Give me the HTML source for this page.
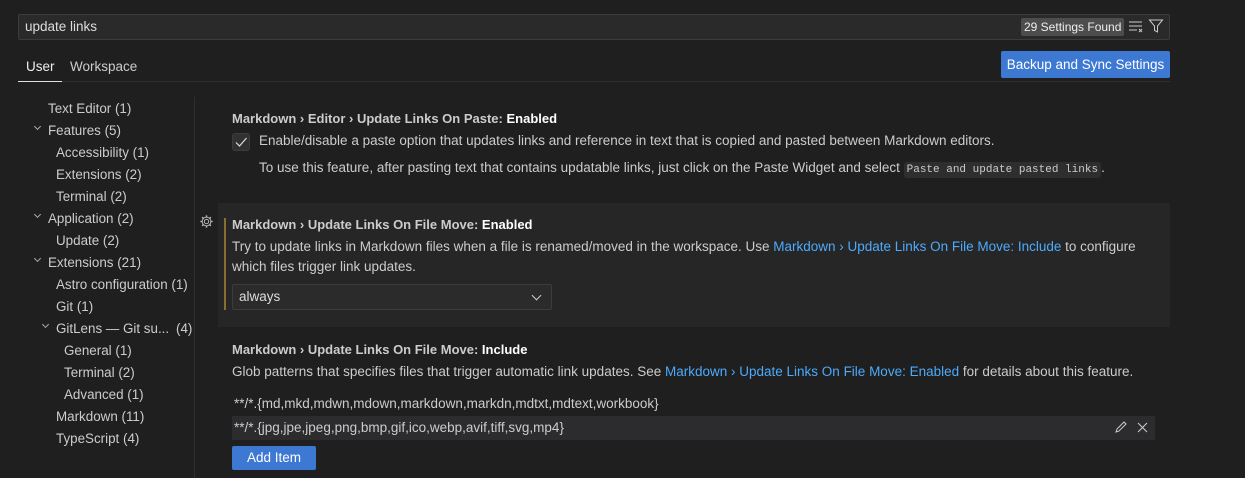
<!DOCTYPE html>
<html><head><style>
*{margin:0;padding:0;box-sizing:border-box}
body{width:1245px;height:478px;background:#1f1f1f;color:#cccccc;font-family:"Liberation Sans",sans-serif;font-size:13.5px;position:relative;overflow:hidden}
.a{position:absolute;white-space:nowrap}
.b{font-weight:bold;font-size:13px}
.w{color:#fff}
.lnk{color:#4daafc}
.tree div{position:absolute;white-space:nowrap;color:#cccccc;font-size:13.4px}
.chev{position:absolute;width:5px;height:5px;border-right:1px solid #aaa;border-bottom:1px solid #aaa;transform:rotate(45deg)}
</style></head><body>
<div class="a" style="left:18px;top:14px;width:1152px;height:26px;background:#2a2a2a;border:1px solid #3c3c3c;border-radius:2px"></div>
<div class="a" style="left:25px;top:19px;color:#ddd">update links</div>
<div class="a" style="left:1021px;top:18px;height:18px;padding:2px 3px;background:#4d4d4d;border-radius:2px;font-size:12px;color:#eee">29 Settings Found</div>
<svg class="a" style="left:1128px;top:20px" width="16" height="14"><path d="M1 2h13M1 6h13M1 10h8" stroke="#ccc" stroke-width="1"/><path d="M11 9l3 3M14 9l-3 3" stroke="#ccc"/></svg>
<svg class="a" style="left:1148px;top:18px" width="16" height="16"><path d="M1.5 2h13l-5 6v6l-3-1.5V8z" fill="none" stroke="#ccc"/></svg>
<div class="a" style="left:26px;top:59px;color:#eee">User</div>
<div class="a" style="left:70px;top:59px;color:#ccc">Workspace</div>
<div class="a" style="left:18px;top:81px;width:1152px;height:1px;background:#2f2f2f"></div>
<div class="a" style="left:18px;top:81px;width:44px;height:1px;background:#e0e0e0"></div>
<div class="a" style="left:1001px;top:51px;width:169px;height:27px;background:#3d79d3;border-radius:2px;color:#fff;text-align:center;line-height:27px">Backup and Sync Settings</div>
<div class="a" style="left:194px;top:97px;width:1px;height:381px;background:#2f2f2f"></div>
<div class="tree">
<div style="left:48px;top:101px">Text Editor (1)</div>
<span class="chev" style="left:35px;top:124px"></span><div style="left:48px;top:123px">Features (5)</div>
<div style="left:56px;top:145px">Accessibility (1)</div>
<div style="left:56px;top:167px">Extensions (2)</div>
<div style="left:56px;top:189px">Terminal (2)</div>
<span class="chev" style="left:35px;top:212px"></span><div style="left:48px;top:211px">Application (2)</div>
<div style="left:56px;top:233px">Update (2)</div>
<span class="chev" style="left:35px;top:256px"></span><div style="left:48px;top:255px">Extensions (21)</div>
<div style="left:56px;top:277px">Astro configuration (1)</div>
<div style="left:56px;top:299px">Git (1)</div>
<span class="chev" style="left:43px;top:322px"></span><div style="left:56px;top:321px">GitLens — Git su...</div><div style="left:176px;top:321px">(4)</div>
<div style="left:64px;top:343px">General (1)</div>
<div style="left:64px;top:365px">Terminal (2)</div>
<div style="left:64px;top:387px">Advanced (1)</div>
<div style="left:56px;top:409px">Markdown (11)</div>
<div style="left:56px;top:431px">TypeScript (4)</div>
</div>
<div class="a b" style="left:232px;top:111px">Markdown › Editor › Update Links On Paste: <span class="w">Enabled</span></div>
<div class="a" style="left:232px;top:133px;width:18px;height:18px;background:#313131;border:1px solid #3c3c3c;border-radius:3px"></div>
<svg class="a" style="left:234px;top:135px" width="14" height="14"><path d="M2 7.5l3.5 3.5L12.5 3" fill="none" stroke="#ddd" stroke-width="1.2"/></svg>
<div class="a" style="left:259px;top:133px">Enable/disable a paste option that updates links and reference in text that is copied and pasted between Markdown editors.</div>
<div class="a" style="left:259px;top:160px">To use this feature, after pasting text that contains updatable links, just click on the Paste Widget and select <span style="font-family:'Liberation Mono',monospace;font-size:11px;background:#2e2e2e;padding:2px 3px;border-radius:3px">Paste and update pasted links</span>.</div>
<div class="a" style="left:218px;top:203px;width:952px;height:124px;background:#262626"></div>
<div class="a" style="left:224px;top:218px;width:2px;height:92px;background:#8a6d2f"></div>
<svg class="a" style="left:199px;top:214px" width="15" height="15" viewBox="0 0 16 16"><circle cx="8" cy="8" r="2.3" fill="none" stroke="#bbb"/><path d="M8 1.5v2M8 12.5v2M1.5 8h2M12.5 8h2M3.4 3.4l1.4 1.4M11.2 11.2l1.4 1.4M3.4 12.6l1.4-1.4M11.2 4.8l1.4-1.4" stroke="#bbb" stroke-width="1.6"/><circle cx="8" cy="8" r="4.6" fill="none" stroke="#bbb"/></svg>
<div class="a b" style="left:232px;top:217px">Markdown › Update Links On File Move: <span class="w">Enabled</span></div>
<div class="a" style="left:232px;top:239px">Try to update links in Markdown files when a file is renamed/moved in the workspace. Use <span class="lnk">Markdown › Update Links On File Move: Include</span> to configure</div>
<div class="a" style="left:232px;top:259px">which files trigger link updates.</div>
<div class="a" style="left:232px;top:284px;width:320px;height:26px;background:#2b2b2b;border:1px solid #3c3c3c;border-radius:2px"></div>
<div class="a" style="left:239px;top:289px;color:#ddd">always</div>
<div class="chev" style="left:533px;top:292px;width:7px;height:7px;border-color:#ccc"></div>
<div class="a b" style="left:232px;top:342px">Markdown › Update Links On File Move: <span class="w">Include</span></div>
<div class="a" style="left:232px;top:364px">Glob patterns that specifies files that trigger automatic link updates. See <span class="lnk">Markdown › Update Links On File Move: Enabled</span> for details about this feature.</div>
<div class="a" style="left:234px;top:396px">**/*.{md,mkd,mdwn,mdown,markdown,markdn,mdtxt,mdtext,workbook}</div>
<div class="a" style="left:232px;top:416px;width:923px;height:24px;background:#2c2c2e"></div>
<div class="a" style="left:234px;top:420px">**/*.{jpg,jpe,jpeg,png,bmp,gif,ico,webp,avif,tiff,svg,mp4}</div>
<svg class="a" style="left:1113px;top:420px" width="15" height="15"><path d="M3 12l1-3 7-7 2 2-7 7z M3 12l3-1" fill="none" stroke="#ccc"/></svg>
<svg class="a" style="left:1137px;top:422px" width="11" height="11"><path d="M1 1l9 9M10 1l-9 9" stroke="#ccc"/></svg>
<div class="a" style="left:232px;top:446px;width:84px;height:24px;background:#3d79d3;border-radius:2px;color:#fff;text-align:center;line-height:24px">Add Item</div>
</body></html>
